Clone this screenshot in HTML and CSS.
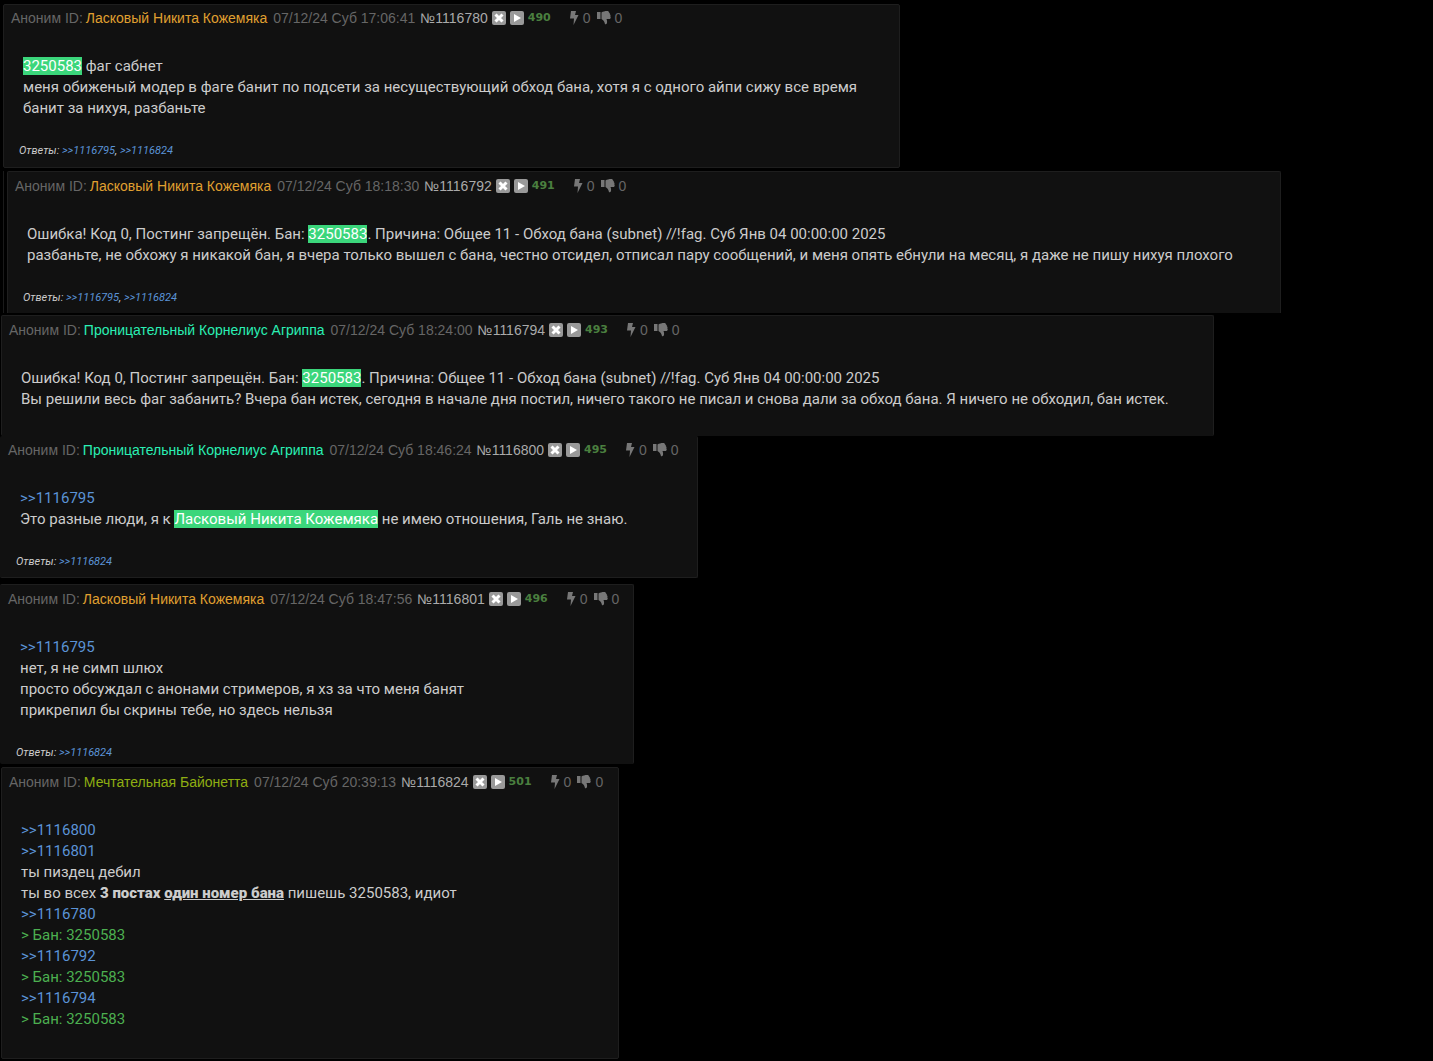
FILE: index.html
```html
<!DOCTYPE html>
<html lang="ru">
<head>
<meta charset="utf-8">
<title>Обсуждение</title>
<link rel="stylesheet" href="styles.css">
</head>
<body>
<svg class="sprite" aria-hidden="true">
  <symbol id="hide" viewBox="0 0 14 14"><rect width="14" height="14" rx="2" fill="#999"/><path d="M3.500 3.500l7 7M10.500 3.500l-7 7" stroke="#fff" stroke-width="3"/></symbol>
  <symbol id="play" viewBox="0 0 14 14"><rect width="14" height="14" rx="2" fill="#999"/><path d="M4 3l7 4-7 4z" fill="#fff"/></symbol>
  <symbol id="bolt" viewBox="0 0 10 14"><path d="M2 0h5L6 4h3.500L4.500 14 5 7.500H1z" fill="#777"/></symbol>
  <symbol id="down" viewBox="0 0 14 14"><path d="M0 1h3.500v7H0zM4.500 1.500C6 .5 8 0 10 0c1.500 0 2 .7 2 1.500.8.300 1 1 .8 1.700.8.500.9 1.300.5 2 .9 1.300.3 2.800-1 2.800H9.500c.6 1.500.8 3 .3 4.500-.4 1-1.800 1.200-2 0C7.500 10.500 6.500 9.500 4.500 8z" fill="#777"/></symbol>
</svg>
<main class="thread">
  <article class="post post-a">
    <header class="head"><span class="anon">Аноним ID:</span><span class="name orange">Ласковый Никита Кожемяка</span><time class="date">07/12/24 Суб 17:06:41</time><a class="num" href="#1116780">№1116780</a><button class="tool" aria-label="Скрыть"><svg><use href="#hide"/></svg></button><button class="tool" aria-label="Ответить"><svg><use href="#play"/></svg></button><span class="count">490</span><button class="vote like"><svg class="bolt"><use href="#bolt"/></svg>0</button><button class="vote"><svg><use href="#down"/></svg>0</button></header>
    <p class="text"><mark>3250583</mark> фаг сабнет<br>меня обиженый модер в фаге банит по подсети за несуществующий обход бана, хотя я с одного айпи сижу все время<br>банит за нихуя, разбаньте</p>
    <p class="replies">Ответы: <a href="#1116795">&gt;&gt;1116795</a>, <a href="#1116824">&gt;&gt;1116824</a></p>
  </article>
  <div class="nested">
  <article class="post post-b">
    <header class="head"><span class="anon">Аноним ID:</span><span class="name orange">Ласковый Никита Кожемяка</span><time class="date">07/12/24 Суб 18:18:30</time><a class="num" href="#1116792">№1116792</a><button class="tool" aria-label="Скрыть"><svg><use href="#hide"/></svg></button><button class="tool" aria-label="Ответить"><svg><use href="#play"/></svg></button><span class="count">491</span><button class="vote like"><svg class="bolt"><use href="#bolt"/></svg>0</button><button class="vote"><svg><use href="#down"/></svg>0</button></header>
    <p class="text">Ошибка! Код 0, Постинг запрещён. Бан: <mark>3250583</mark>. Причина: Общее 11 - Обход бана (subnet) //!fag. Суб Янв 04 00:00:00 2025<br>разбаньте, не обхожу я никакой бан, я вчера только вышел с бана, честно отсидел, отписал пару сообщений, и меня опять ебнули на месяц, я даже не пишу нихуя плохого</p>
    <p class="replies">Ответы: <a href="#1116795">&gt;&gt;1116795</a>, <a href="#1116824">&gt;&gt;1116824</a></p>
  </article>
  </div>
  <article class="post post-c">
    <header class="head"><span class="anon">Аноним ID:</span><span class="name mint">Проницательный Корнелиус Агриппа</span><time class="date">07/12/24 Суб 18:24:00</time><a class="num" href="#1116794">№1116794</a><button class="tool" aria-label="Скрыть"><svg><use href="#hide"/></svg></button><button class="tool" aria-label="Ответить"><svg><use href="#play"/></svg></button><span class="count">493</span><button class="vote like"><svg class="bolt"><use href="#bolt"/></svg>0</button><button class="vote"><svg><use href="#down"/></svg>0</button></header>
    <p class="text">Ошибка! Код 0, Постинг запрещён. Бан: <mark>3250583</mark>. Причина: Общее 11 - Обход бана (subnet) //!fag. Суб Янв 04 00:00:00 2025<br>Вы решили весь фаг забанить? Вчера бан истек, сегодня в начале дня постил, ничего такого не писал и снова дали за обход бана. Я ничего не обходил, бан истек.</p>
  </article>
  <article class="post post-d">
    <header class="head"><span class="anon">Аноним ID:</span><span class="name mint">Проницательный Корнелиус Агриппа</span><time class="date">07/12/24 Суб 18:46:24</time><a class="num" href="#1116800">№1116800</a><button class="tool" aria-label="Скрыть"><svg><use href="#hide"/></svg></button><button class="tool" aria-label="Ответить"><svg><use href="#play"/></svg></button><span class="count">495</span><button class="vote like"><svg class="bolt"><use href="#bolt"/></svg>0</button><button class="vote"><svg><use href="#down"/></svg>0</button></header>
    <p class="text"><a href="#1116795">&gt;&gt;1116795</a><br>Это разные люди, я к <mark>Ласковый Никита Кожемяка</mark> не имею отношения, Галь не знаю.</p>
    <p class="replies">Ответы: <a href="#1116824">&gt;&gt;1116824</a></p>
  </article>
  <article class="post post-e">
    <header class="head"><span class="anon">Аноним ID:</span><span class="name orange">Ласковый Никита Кожемяка</span><time class="date">07/12/24 Суб 18:47:56</time><a class="num" href="#1116801">№1116801</a><button class="tool" aria-label="Скрыть"><svg><use href="#hide"/></svg></button><button class="tool" aria-label="Ответить"><svg><use href="#play"/></svg></button><span class="count">496</span><button class="vote like"><svg class="bolt"><use href="#bolt"/></svg>0</button><button class="vote"><svg><use href="#down"/></svg>0</button></header>
    <p class="text"><a href="#1116795">&gt;&gt;1116795</a><br>нет, я не симп шлюх<br>просто обсуждал с анонами стримеров, я хз за что меня банят<br>прикрепил бы скрины тебе, но здесь нельзя</p>
    <p class="replies">Ответы: <a href="#1116824">&gt;&gt;1116824</a></p>
  </article>
  <article class="post post-f">
    <header class="head"><span class="anon">Аноним ID:</span><span class="name olive">Мечтательная Байонетта</span><time class="date">07/12/24 Суб 20:39:13</time><a class="num" href="#1116824">№1116824</a><button class="tool" aria-label="Скрыть"><svg><use href="#hide"/></svg></button><button class="tool" aria-label="Ответить"><svg><use href="#play"/></svg></button><span class="count">501</span><button class="vote like"><svg class="bolt"><use href="#bolt"/></svg>0</button><button class="vote"><svg><use href="#down"/></svg>0</button></header>
    <p class="text"><a href="#1116800">&gt;&gt;1116800</a><br><a href="#1116801">&gt;&gt;1116801</a><br>ты пиздец дебил<br>ты во всех <strong>3 постах <u>один номер бана</u></strong> пишешь 3250583, идиот<br><a href="#1116780">&gt;&gt;1116780</a><br><span class="quote">&gt; Бан: 3250583</span><br><a href="#1116792">&gt;&gt;1116792</a><br><span class="quote">&gt; Бан: 3250583</span><br><a href="#1116794">&gt;&gt;1116794</a><br><span class="quote">&gt; Бан: 3250583</span></p>
  </article>
</main>
</body>
</html>
```
FILE: styles.css
```css
* { box-sizing: border-box; }
body {
  margin: 0;
  background: #000;
  color: #ccc;
  font: 15px/21px Roboto, "Noto Sans", sans-serif;
}
a { color: #5b93d6; text-decoration: none; }
button { padding: 0; border: 0; background: none; color: inherit; font: inherit; }
svg { display: block; width: 14px; height: 14px; }
.sprite { position: absolute; width: 0; height: 0; }

.thread { display: flex; flex-direction: column; align-items: flex-start; padding-top: 4px; }

/* Posts */
.post {
  max-width: 100%;
  padding: 4px 7px 7px;
  border: 1px solid #1e1e1e;
  border-radius: 2px;
  background: #111;
}
.post-a { width: 897px; margin: 0 0 3px 3px; padding-top: 3px; padding-bottom: 8px; }
.nested { max-width: 100%; margin: 0 0 2px 3px; padding-left: 3px; border-left: 1px solid #1a1a1a; }
.post-b { width: 1274px; border-bottom: 0; border-radius: 2px 2px 0 0; }
.post-c { width: 1213px; margin-left: 1px; padding-bottom: 26px; border-bottom: 0; }
.post-d { width: 698px; margin-bottom: 6px; border-top: 0; border-left: 0; padding-left: 8px; }
.post-e { width: 634px; margin-bottom: 3px; padding-left: 8px; padding-bottom: 3px; border-left: 0; border-bottom: 0; }
.post-f { width: 618px; margin: 0 0 2px 1px; padding-bottom: 28px; }

/* Post header */
.head {
  display: flex;
  align-items: center;
  height: 20px;
  color: #666;
  font: 14px/20px "Liberation Sans", Arial, sans-serif;
  white-space: nowrap;
}
.name { margin-left: 3px; }
.date { margin-left: 6px; }
.num { margin: 0 1px 0 5px; color: #aaa; }
.tool { margin-left: 4px; }
.tool:first-of-type { margin-left: 3px; }
.count { margin-left: 4px; color: #4a7f3f; font: bold 11px/20px "DejaVu Sans", sans-serif; }
.vote { display: flex; align-items: center; gap: 4px; margin-left: 6px; }
.like { margin-left: 18px; }
.bolt { width: 10px; }
.orange { color: #e0a030; }
.mint { color: #2aefb4; }
.olive { color: #8fae12; }

/* Post text */
.text { margin: 28px 12px 0; }
.replies { margin: 24px 8px 0; font: italic 11px/16px Roboto, sans-serif; }
mark { background: #3bd67b; color: #fff; }
strong { font-weight: 900; }
.quote { color: #4caf50; }
```
